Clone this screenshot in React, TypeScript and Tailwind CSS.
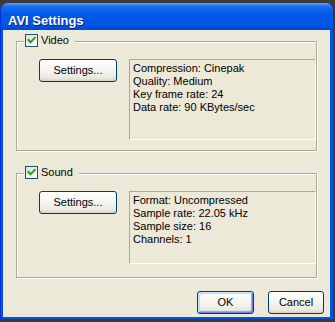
const font = "font-['Tahoma','Liberation_Sans',sans-serif]"

const CheckBox = () => (
  <span className="w-[13px] h-[13px] border border-[#1c5180] bg-[linear-gradient(135deg,#dcdcd7_0%,#f4f4f0_60%,#ffffff_100%)] flex items-center justify-center">
    <svg width="11" height="11" viewBox="0 0 11 11">
      <path d="M2.5 5 L4.5 7.2 L8.8 2.8" fill="none" stroke="#21a121" strokeWidth="2" strokeLinecap="square" />
    </svg>
  </span>
)

const XpButton = ({ label, def = false, w }: { label: string; def?: boolean; w: string }) => (
  <button
    className={`${w} h-[23px] rounded-[3px] border border-[#003c74] bg-[linear-gradient(to_bottom,#ffffff_0%,#f5f4ef_50%,#ebe9e0_85%,#d6d0c5_100%)] text-[11px] text-black leading-none ${
      def ? 'shadow-[inset_1px_1px_0_#cee7ff,inset_-1px_-1px_0_#6982ee,inset_2px_2px_0_#bcd4f6,inset_-2px_-2px_0_#89ade4]' : ''
    }`}
  >
    {label}
  </button>
)

const Group = ({ title, lines, h, boxH }: { title: string; lines: string[]; h: string; boxH: string }) => (
  <div className={`relative ${h} border border-[#aca899] shadow-[inset_1px_1px_0_#fff,1px_1px_0_#fff] pt-[17px] pl-[22px] flex gap-[12px]`}>
    <label className="absolute left-[7px] top-[-8px] flex items-center gap-[3px] bg-[#ece9d8] pl-[1px] pr-[6px] text-[11px] leading-[13px]">
      <CheckBox />
      <span>{title}</span>
    </label>
    <XpButton label="Settings..." w="w-[78px]" />
    <div className={`w-[187px] ${boxH} border border-t-[#aca899] border-l-[#aca899] border-b-white border-r-white px-[3px] pt-[2px] text-[11px] leading-[13px]`}>
      {lines.map((l) => (
        <div key={l} className="whitespace-nowrap">{l}</div>
      ))}
    </div>
  </div>
)

export default function App() {
  return (
    <div className={`w-[335px] h-[322px] bg-[#3b3b3b] pt-[3px] overflow-hidden ${font}`}>
      <div className="w-[334px] h-[317px] flex flex-col rounded-t-[8px] bg-[#0054e3] border-l border-r border-b border-[#0831d9]">
        <div className="h-[27px] shrink-0 rounded-t-[7px] bg-[linear-gradient(to_bottom,#5aa3ff_0%,#1a6ff0_12%,#0058e6_40%,#0056e4_80%,#0047cf_100%)] pl-[7px] pt-[5px]">
          <span className="text-white font-bold text-[13px] leading-[16px] [text-shadow:1px_1px_0_#0a1e8a] font-['Trebuchet_MS','Liberation_Sans',sans-serif]">
            AVI Settings
          </span>
        </div>
        <div className="ml-[2px] mr-[3px] h-[287px] bg-[#ece9d8] text-black flex flex-col px-[13px] pt-[11px]">
          <Group
            title="Video"
            h="h-[110px]"
            boxH="h-[81px]"
            lines={['Compression: Cinepak', 'Quality: Medium', 'Key frame rate: 24', 'Data rate: 90 KBytes/sec']}
          />
          <div className="mt-[22px]">
            <Group
              title="Sound"
              h="h-[105px]"
              boxH="h-[73px]"
              lines={['Format: Uncompressed', 'Sample rate: 22.05 kHz', 'Sample size: 16', 'Channels: 1']}
            />
          </div>
          <div className="mt-[13px] flex justify-end gap-[14px] pr-[6px] -mr-[13px]">
            <XpButton label="OK" def w="w-[57px]" />
            <XpButton label="Cancel" w="w-[56px]" />
          </div>
        </div>
      </div>
    </div>
  )
}
